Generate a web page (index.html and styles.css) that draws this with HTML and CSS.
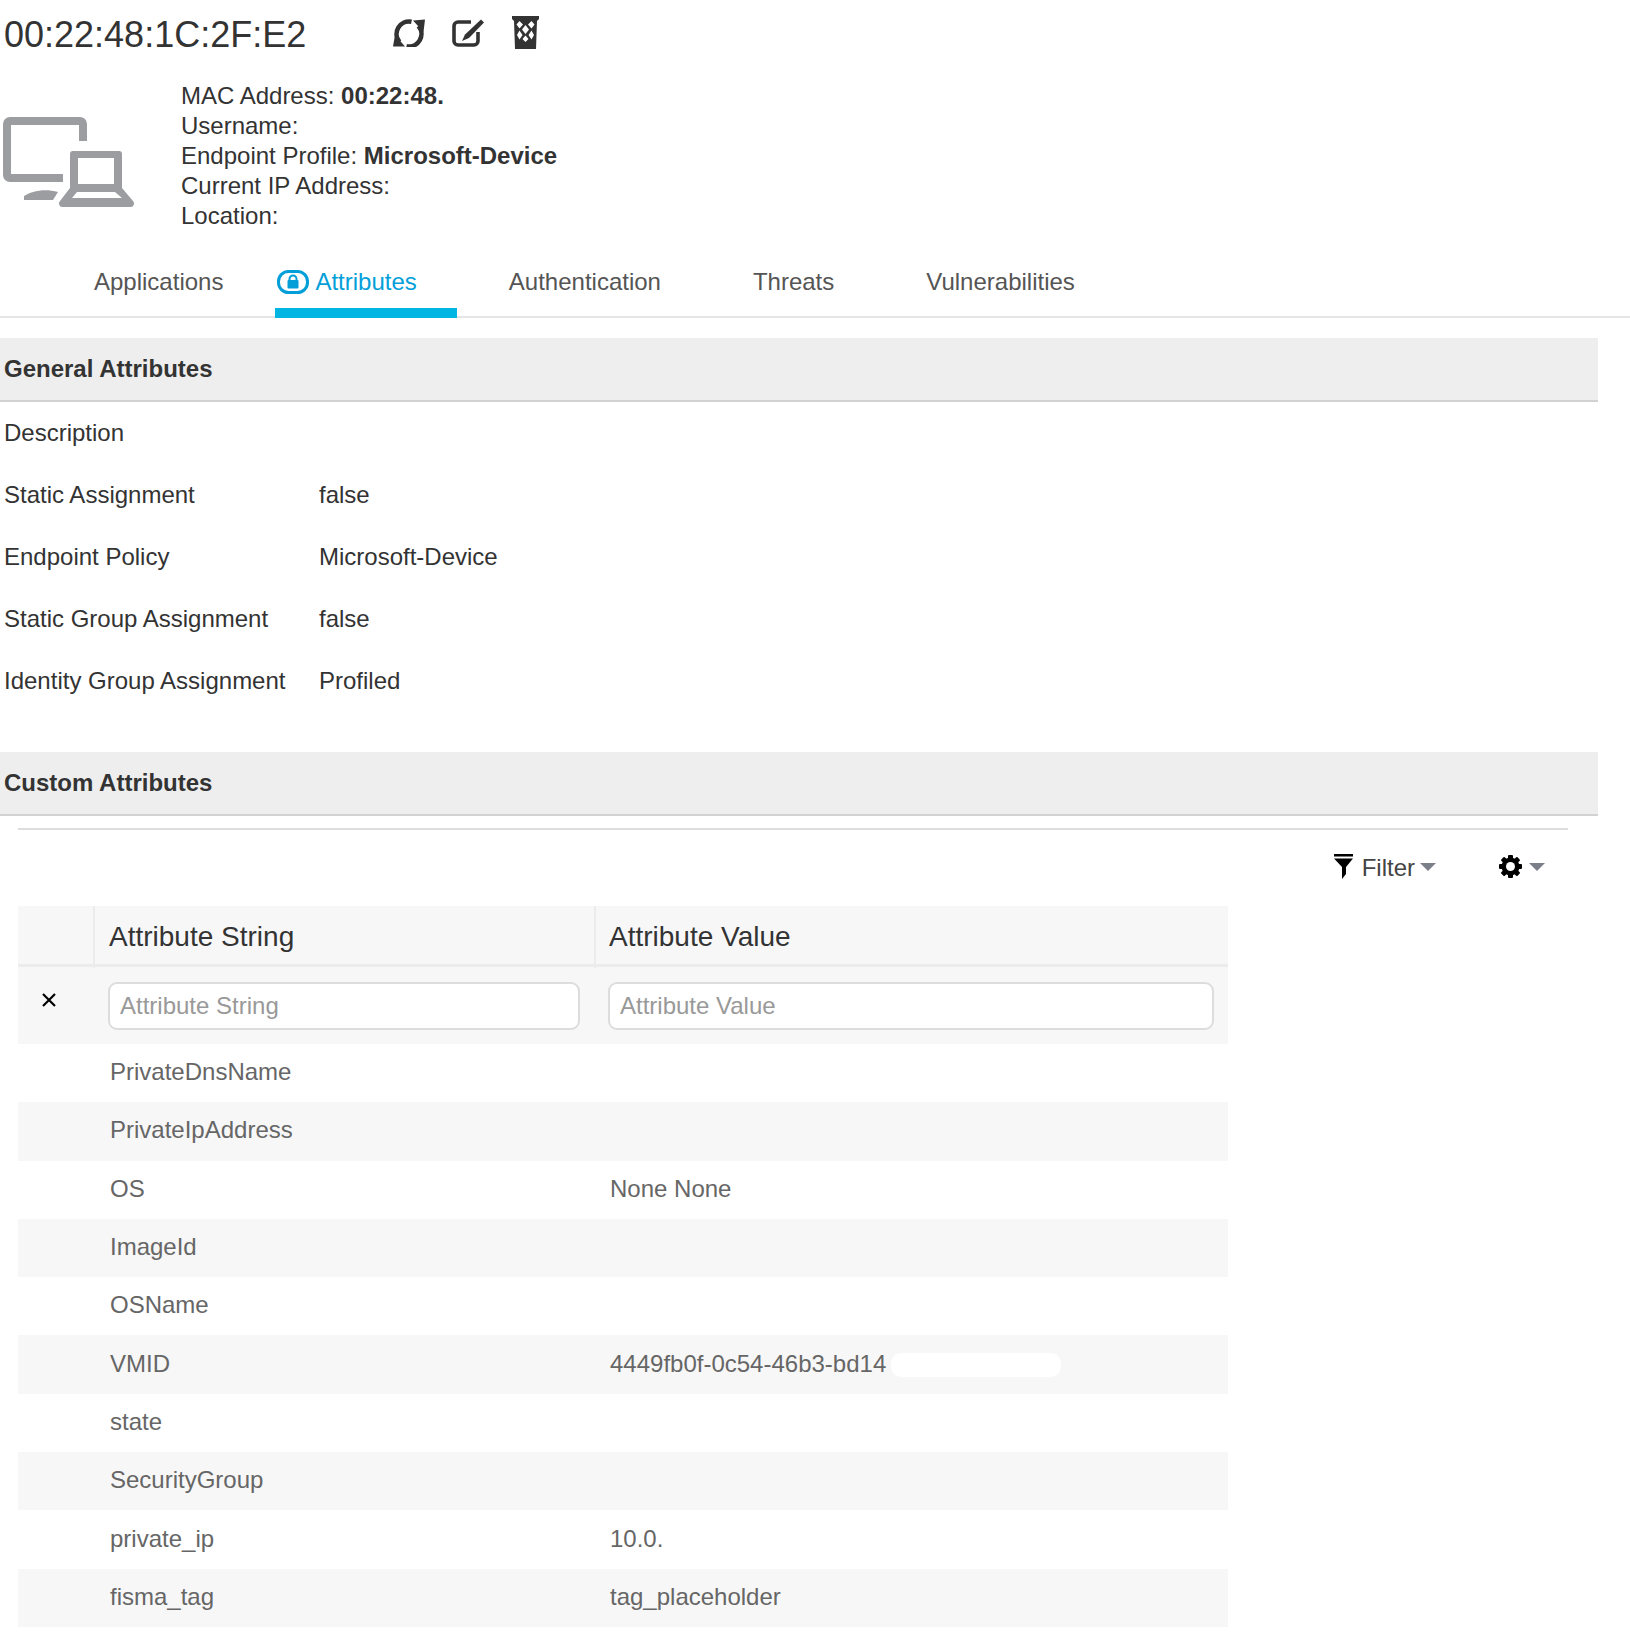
FILE: index.html
```html
<!DOCTYPE html>
<html lang="en">
<head>
  <meta charset="UTF-8">
  <title>Endpoint 00:22:48:1C:2F:E2</title>
  <link rel="stylesheet" href="styles.css">
</head>
<body>
  <div class="title-row">
    <h1>00:22:48:1C:2F:E2</h1>
    <svg class="ico-refresh" width="32" height="30" viewBox="0 0 32 30">
      <path d="M18.5 4.7 A12.5 12.5 0 0 0 6.5 25 M13.5 29.3 A12.5 12.5 0 0 0 25.5 9" fill="none" stroke="#333" stroke-width="4.6"/>
      <path d="M20 3.5 L32 2.5 L30.5 15 Z M0 29.5 L12 29.5 L2 18 Z" fill="#333"/>
    </svg>
    <svg class="ico-edit" width="32" height="28" viewBox="0 0 32 28">
      <path d="M19 3 H6 a4 4 0 0 0 -4 4 V22 a4 4 0 0 0 4 4 H22 a4 4 0 0 0 4 -4 V13" fill="none" stroke="#333" stroke-width="3.6"/>
      <path d="M29 0.5 L32 3.5 L17 19 L10 22 L13 15.5 Z" fill="#333"/>
    </svg>
    <svg class="ico-trash" width="27" height="33" viewBox="0 0 27 33">
      <path d="M0 0 H27 V3 L25 5 L24 33 H3 L2 5 L0 3 Z" fill="#333"/>
      <path d="M7.5 5 L11 8.5 L7.5 12.5 L4.5 8.5 Z M19.5 5 L22.5 8.5 L19.5 12.5 L16 8.5 Z M13.5 9 L17 13.5 L13.5 18 L10 13.5 Z M7.5 14.5 L10.5 19 L7.5 23.5 L5 19 Z M19.5 14.5 L22 19 L19.5 23.5 L16.5 19 Z M13.5 19.5 L16.5 23 L13.5 26 L10.5 23 Z" fill="#fff"/>
    </svg>
  </div>

  <div class="summary">
    <svg class="device" width="134" height="92" viewBox="0 0 134 92">
      <path d="M80 25 V8 a3 3 0 0 0 -3 -3 H7 a3 3 0 0 0 -3 3 V59 a3 3 0 0 0 3 3 H60" fill="none" stroke="#9b9da0" stroke-width="8"/>
      <path d="M21 80 C28 75 42 72 55 76 L50 84 H21 Z" fill="#9b9da0"/>
      <path fill-rule="evenodd" fill="#9b9da0" d="M70 35 H116 a3 3 0 0 1 3 3 V72 L130 85 a3.5 3.5 0 0 1 -3 6 H60 a3.5 3.5 0 0 1 -3 -6 L67 72 V38 a3 3 0 0 1 3 -3 Z M75 42 V68 H111 V42 Z M74 76 L69 82 H119 L112 76 Z"/>
    </svg>
    <div class="info">
      <div>MAC Address: <b>00:22:48.</b></div>
      <div>Username:</div>
      <div>Endpoint Profile: <b>Microsoft-Device</b></div>
      <div>Current IP Address:</div>
      <div>Location:</div>
    </div>
  </div>

  <div class="tabs">
    <div class="tab">Applications</div>
    <div class="tab active">
      <svg class="lock" width="32" height="24" viewBox="0 0 32 24">
        <rect x="1.5" y="1.5" width="29" height="21" rx="10" fill="none" stroke="#049fd9" stroke-width="3"/>
        <rect x="10.5" y="10" width="11" height="8.5" rx="1" fill="#049fd9"/>
        <path d="M12.5 11 V9 a3.5 3.5 0 0 1 7 0 V11" fill="none" stroke="#049fd9" stroke-width="2"/>
      </svg>
      Attributes
    </div>
    <div class="tab">Authentication</div>
    <div class="tab">Threats</div>
    <div class="tab">Vulnerabilities</div>
  </div>

  <h3 class="section general">General Attributes</h3>
  <div class="attr"><span>Description</span><span></span></div>
  <div class="attr"><span>Static Assignment</span><span>false</span></div>
  <div class="attr"><span>Endpoint Policy</span><span>Microsoft-Device</span></div>
  <div class="attr"><span>Static Group Assignment</span><span>false</span></div>
  <div class="attr"><span>Identity Group Assignment</span><span>Profiled</span></div>

  <h3 class="section custom">Custom Attributes</h3>
  <div class="rule"></div>

  <div class="toolbar">
    <svg class="ico-filter" width="19" height="25" viewBox="0 0 19 25">
      <rect x="0" y="0" width="19" height="2.5" fill="#000"/>
      <path d="M0 4.5 H19 L12 13 V20 L8 25 V13 Z" fill="#000"/>
    </svg>
    <span class="filter-label">Filter</span>
    <span class="caret"></span>
    <svg class="ico-gear" width="23" height="23" viewBox="0 0 23 23">
      <circle cx="11.5" cy="11.5" r="6.5" fill="none" stroke="#000" stroke-width="5"/>
      <g fill="#000">
        <rect x="9" y="0" width="5" height="23" rx="1"/>
        <rect x="9" y="0" width="5" height="23" rx="1" transform="rotate(45 11.5 11.5)"/>
        <rect x="9" y="0" width="5" height="23" rx="1" transform="rotate(90 11.5 11.5)"/>
        <rect x="9" y="0" width="5" height="23" rx="1" transform="rotate(135 11.5 11.5)"/>
      </g>
      <circle cx="11.5" cy="11.5" r="4.5" fill="#fff"/>
    </svg>
    <span class="caret"></span>
  </div>

  <div class="grid">
    <div class="row head">
      <div></div>
      <div>Attribute String</div>
      <div>Attribute Value</div>
    </div>
    <div class="row filters">
      <div class="clear">
        <svg width="16" height="16" viewBox="0 0 16 16"><path d="M2 2 L14 14 M14 2 L2 14" stroke="#000" stroke-width="2.2"/></svg>
      </div>
      <div><input type="text" placeholder="Attribute String"></div>
      <div><input type="text" placeholder="Attribute Value"></div>
    </div>
    <div class="row"><div></div><div>PrivateDnsName</div><div></div></div>
    <div class="row"><div></div><div>PrivateIpAddress</div><div></div></div>
    <div class="row"><div></div><div>OS</div><div>None None</div></div>
    <div class="row"><div></div><div>ImageId</div><div></div></div>
    <div class="row"><div></div><div>OSName</div><div></div></div>
    <div class="row"><div></div><div>VMID</div><div>4449fb0f-0c54-46b3-bd14<span class="blot"></span></div></div>
    <div class="row"><div></div><div>state</div><div></div></div>
    <div class="row"><div></div><div>SecurityGroup</div><div></div></div>
    <div class="row"><div></div><div>private_ip</div><div>10.0.</div></div>
    <div class="row"><div></div><div>fisma_tag</div><div>tag_placeholder</div></div>
  </div>
</body>
</html>
```

FILE: styles.css
```css
body {
  margin: 0;
  background: #fff;
  color: #333;
  font-family: "Liberation Sans", Arial, sans-serif;
  font-size: 24px;
  line-height: 30px;
}

.title-row {
  height: 81px;
  display: flex;
  align-items: flex-start;
}

h1 {
  margin: 16px 0 0 4px;
  width: 389px;
  font-size: 36px;
  line-height: 38px;
  font-weight: normal;
}

.ico-refresh {
  margin-top: 17px;
}

.ico-edit {
  margin: 19px 0 0 27px;
}

.ico-trash {
  margin: 16px 0 0 28px;
}

.summary {
  display: flex;
  height: 150px;
}

.device {
  margin: 35px 44px 0 3px;
}

.tabs {
  display: flex;
  padding-left: 48px;
  border-bottom: 2px solid #e5e5e5;
  color: #555;
}

.tab {
  padding: 36px 46px 11px;
  margin-bottom: -2px;
  border-bottom: 10px solid transparent;
  white-space: nowrap;
}

.tab.active {
  display: flex;
  align-items: center;
  gap: 6px;
  margin-left: 6px;
  margin-right: 6px;
  padding: 36px 40px 11px 2px;
  color: #049fd9;
  border-bottom-color: #00b5e2;
}

.section {
  width: 1594px;
  height: 62px;
  margin: 0;
  padding-left: 4px;
  background: #eee;
  border-bottom: 2px solid #d2d2d2;
  font-size: 24px;
  line-height: 61px;
}

.general {
  margin-top: 20px;
}

.custom {
  margin-top: 40px;
}

.attr {
  height: 62px;
  padding-left: 4px;
  display: grid;
  grid-template-columns: 315px 1fr;
  align-items: center;
}

.rule {
  width: 1550px;
  height: 2px;
  margin: 12px 0 0 18px;
  background: #ddd;
}

.toolbar {
  height: 76px;
  padding-right: 85px;
  display: flex;
  justify-content: flex-end;
  align-items: center;
  color: #444;
}

.ico-filter {
  margin: 0 9px 3px 0;
}

.filter-label {
  margin-right: 5px;
}

.ico-gear {
  margin: 0 7px 3px 63px;
}

.caret {
  width: 0;
  height: 0;
  margin-bottom: 2px;
  border-left: 8px solid transparent;
  border-right: 8px solid transparent;
  border-top: 8px solid #7a7f89;
}

.grid {
  width: 1210px;
  margin-left: 18px;
  color: #666;
}

.row {
  height: 58.3px;
  display: grid;
  grid-template-columns: 75px 501px 634px;
  align-items: center;
}

.row > div {
  padding: 0 0 2px 16px;
  box-sizing: border-box;
}

.row:nth-child(even) {
  background: #f7f7f7;
}

.row.head,
.row.filters {
  background: #f7f7f7;
}

.row.head {
  height: 61px;
  border-bottom: 3px solid #ececec;
  box-sizing: border-box;
  align-items: stretch;
  color: #333;
  font-size: 28px;
}

.row.head > div {
  line-height: 62px;
  padding: 0 0 0 13px;
  border-left: 2px solid #ececec;
}

.row.head > div:first-child {
  border-left: none;
}

.row.filters {
  height: 77px;
}

.row.filters > div {
  padding: 0 14px;
}

.row.filters > .clear {
  padding: 0 0 12px 23px;
  line-height: 0;
}

.row > div:nth-child(2) {
  padding-left: 17px;
}

.row.head > div:nth-child(2) {
  padding-left: 14px;
}

.row.filters > div:nth-child(2) {
  padding: 0 14px 0 15px;
}

input {
  width: 100%;
  height: 48px;
  box-sizing: border-box;
  padding: 0 10px;
  border: 2px solid #ddd;
  border-radius: 9px;
  background: #fff;
  font-family: "Liberation Sans", Arial, sans-serif;
  font-size: 24px;
  color: #333;
}

input::placeholder {
  color: #999;
  opacity: 1;
}

.blot {
  display: inline-block;
  width: 170px;
  height: 24px;
  margin-left: 5px;
  vertical-align: middle;
  background: #fff;
  border-radius: 10px;
}
```
